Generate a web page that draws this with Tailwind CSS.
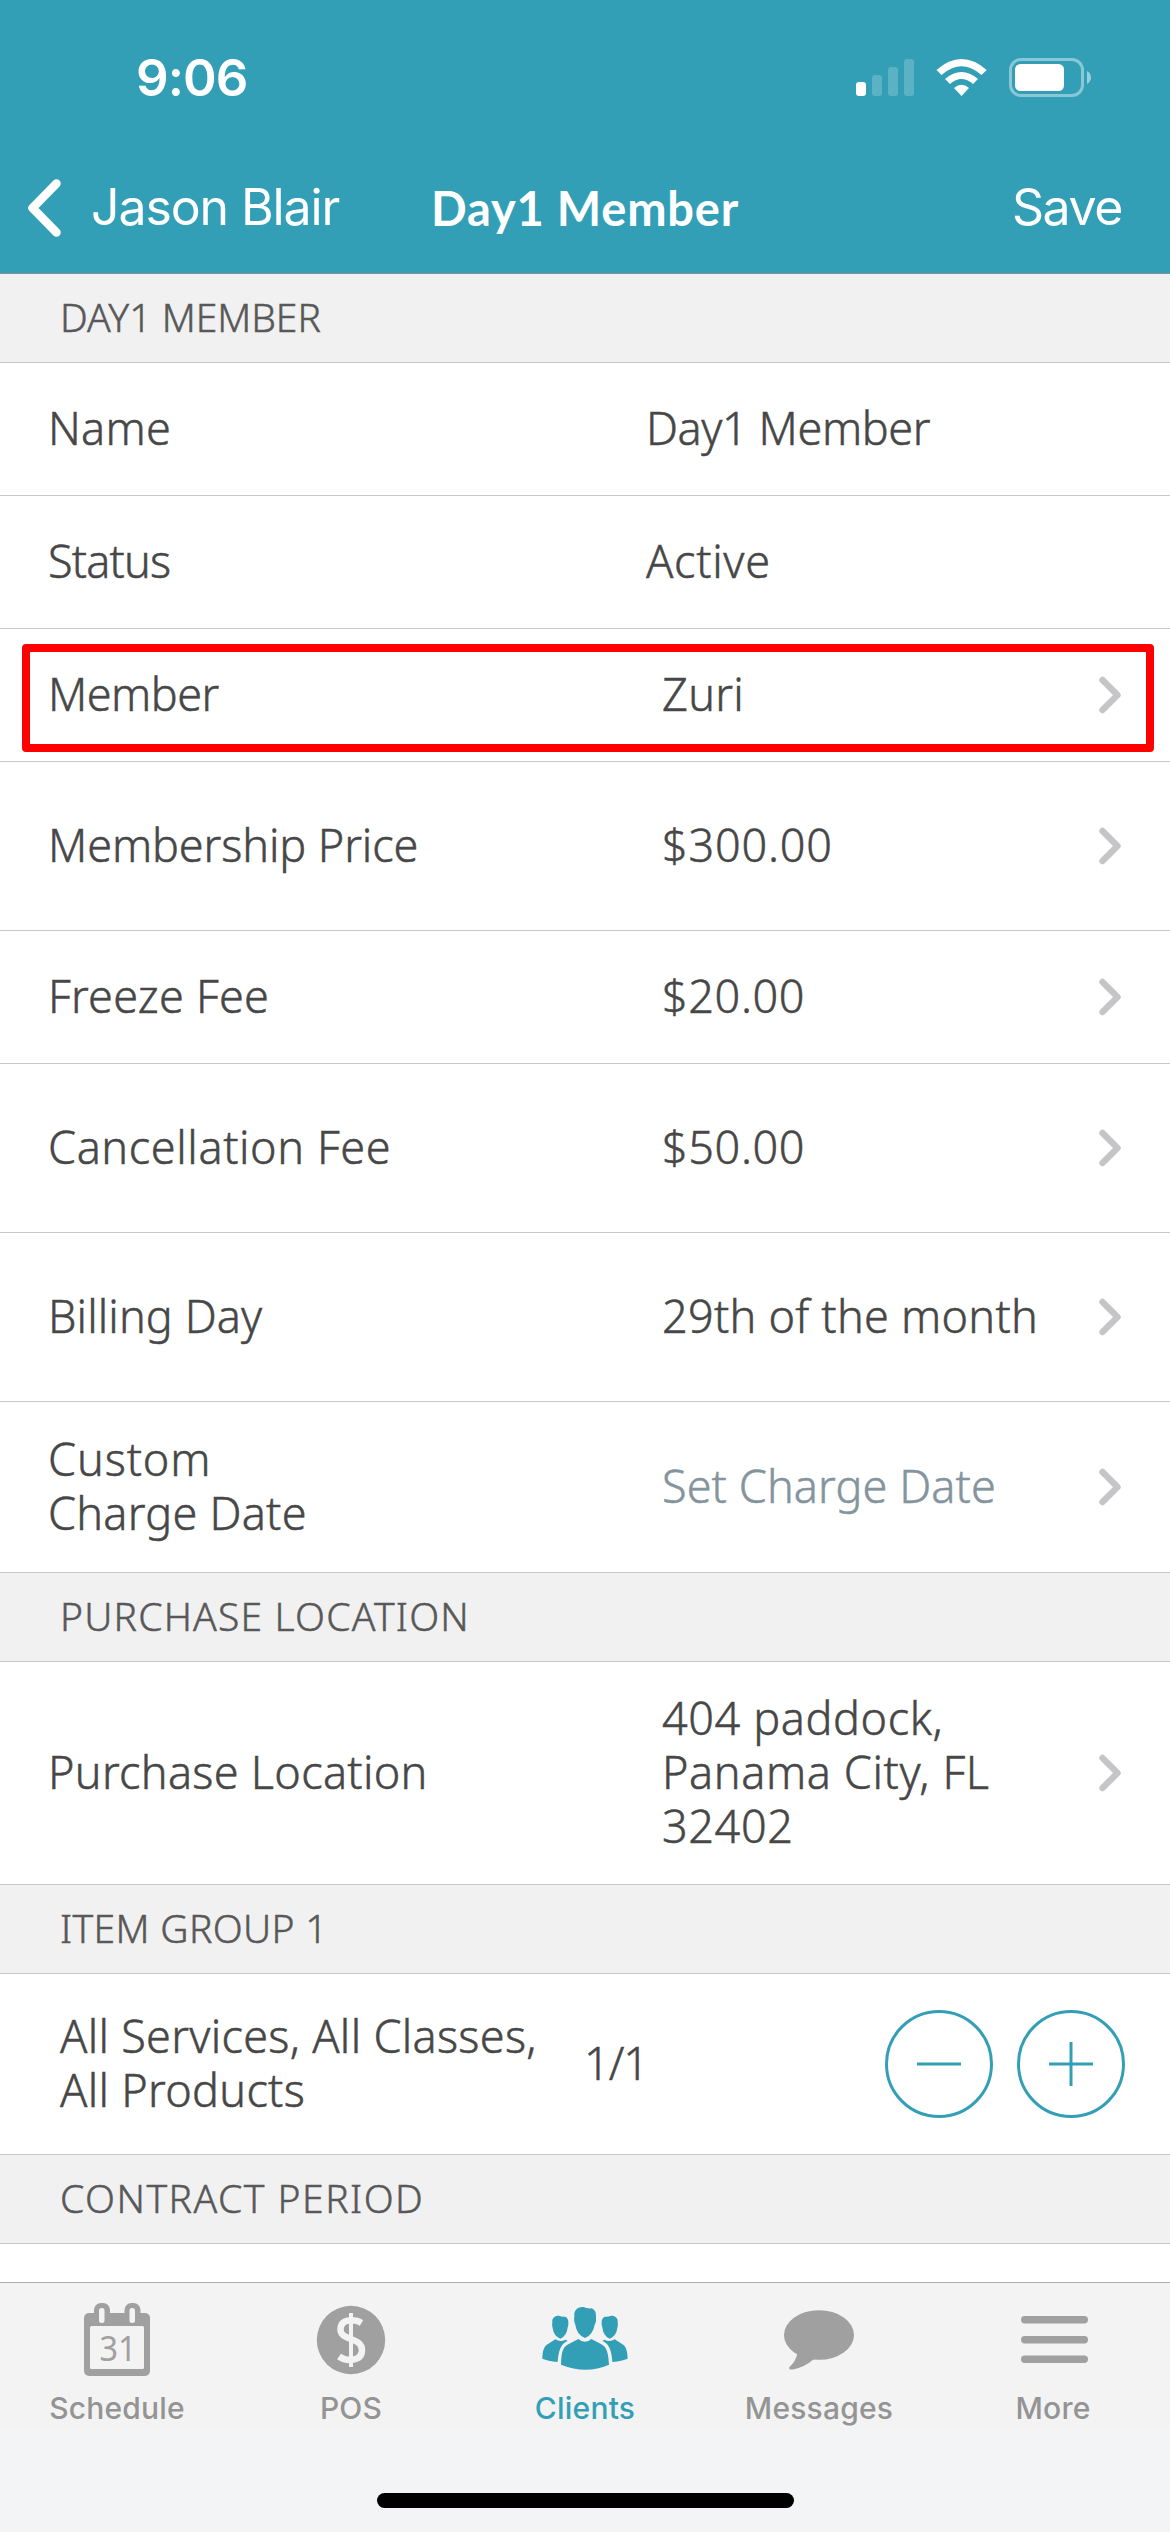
<!DOCTYPE html>
<html lang="en">
<head>
<meta charset="utf-8">
<title>Day1 Member</title>
<script src="https://cdn.jsdelivr.net/npm/@tailwindcss/browser@4"></script>
</head>
<body class="w-[1170px] h-[2532px] overflow-hidden bg-white font-['Noto_Sans',sans-serif] text-[#474747]">
<svg class="hidden">
  <symbol id="chev" viewBox="0 0 22 38"><path d="M3.5 4 L18.5 19 L3.5 34" fill="none" stroke="#c5c5c8" stroke-width="6.4" stroke-linecap="round" stroke-linejoin="round"/></symbol>
</svg>
<div class="flex flex-col h-[2532px]">
  <header class="h-[274px] shrink-0 bg-[#329fb7] border-b border-[#8a9294] text-white font-['Inter',sans-serif] flex flex-col">
    <div class="h-[154px] pl-[136px] pr-[78px] pt-px flex items-center justify-between">
      <span class="text-[51px] font-semibold leading-none tracking-[-0.9px]">9:06</span>
      <svg class="w-[236px] h-[40px]" viewBox="856 58 236 40">
        <rect x="856" y="82" width="10" height="14" rx="3" fill="#fff"/>
        <g fill="#fff" fill-opacity=".2">
          <rect x="872" y="75" width="10" height="21" rx="3"/>
          <rect x="888" y="67" width="10" height="29" rx="3"/>
          <rect x="904" y="59" width="10" height="37" rx="3"/>
        </g>
        <g fill="#fff">
          <path d="M936.5 70 Q961.500 48 986.700 70 L981.500 75 Q961.500 57.500 941.500 75Z"/>
          <path d="M945 79 Q961.500 65 978 79 L973 84 Q961.500 74 950 84Z"/>
          <path d="M954 88 Q961.500 81.500 969 88 L961.500 96Z"/>
        </g>
        <rect x="1010.500" y="59.500" width="72" height="36" rx="10.500" fill="none" stroke="#fff" stroke-opacity=".42" stroke-width="3"/>
        <rect x="1015" y="64" width="49" height="27" rx="5.500" fill="#fff"/>
        <path d="M1087 71 C1092.300 73.500 1092.300 81.500 1087 84Z" fill="#fff" fill-opacity=".5"/>
      </svg>
    </div>
    <div class="h-[107px] pl-7 pr-[48px] grid grid-cols-[403px_1fr_auto] items-center">
      <div class="flex items-center gap-[30px]">
        <svg class="w-[33px] h-[58px]" viewBox="0 0 33 58"><path d="M28.500 4.500 L4.500 29 L28.500 53.500" fill="none" stroke="#fff" stroke-width="8.500" stroke-linecap="round" stroke-linejoin="round"/></svg>
        <span class="text-[50px] tracking-[-1.1px] leading-none whitespace-nowrap pb-0.5">Jason Blair</span>
      </div>
      <span class="font-['Lato',sans-serif] font-bold text-[47px] tracking-[0.8px] leading-none pt-0.5">Day1 Member</span>
      <span class="text-[50px] tracking-[-1.4px] leading-none pb-0.5">Save</span>
    </div>
  </header>

  <main class="h-[2008px] shrink-0 overflow-hidden text-[45px] leading-[54px] font-light tracking-[0.25px] [-webkit-text-stroke:0.5px] [&_span]:pb-0.5 [&_h2]:pb-0.5">
    <h2 class="h-[89px] bg-[#f1f1f1] border-b border-[#c8c8c9] pl-[60px] flex items-center text-[39px] text-[#585858] tracking-normal">DAY1 MEMBER</h2>
    <div class="h-[133px] border-b border-[#c8c8c9] pl-12 grid grid-cols-[598px_1fr] items-center"><span>Name</span><span class="tracking-[-0.4px]">Day1 Member</span></div>
    <div class="h-[133px] border-b border-[#c8c8c9] pl-12 grid grid-cols-[598px_1fr] items-center"><span class="tracking-[-0.8px]">Status</span><span class="tracking-[0.7px]">Active</span></div>
    <div class="relative h-[133px] border-b border-[#c8c8c9] pl-12 pr-[49px] grid grid-cols-[614px_1fr_22px] items-center"><span class="tracking-[-0.5px]">Member</span><span>Zuri</span><svg class="w-[22px] h-[38px]"><use href="#chev"/></svg>
      <div class="absolute left-[22px] top-[15px] w-[1132px] h-[108px] border-8 border-[#ff0000] rounded"></div>
    </div>
    <div class="h-[169px] border-b border-[#c8c8c9] pl-12 pr-[49px] grid grid-cols-[614px_1fr_22px] items-center"><span class="tracking-[-0.1px]">Membership Price</span><span class="tracking-[0.8px]">$300.00</span><svg class="w-[22px] h-[38px]"><use href="#chev"/></svg></div>
    <div class="h-[133px] border-b border-[#c8c8c9] pl-12 pr-[49px] grid grid-cols-[614px_1fr_22px] items-center"><span>Freeze Fee</span><span class="tracking-[0.6px]">$20.00</span><svg class="w-[22px] h-[38px]"><use href="#chev"/></svg></div>
    <div class="h-[169px] border-b border-[#c8c8c9] pl-12 pr-[49px] grid grid-cols-[614px_1fr_22px] items-center"><span class="tracking-[0.6px]">Cancellation Fee</span><span class="tracking-[0.6px]">$50.00</span><svg class="w-[22px] h-[38px]"><use href="#chev"/></svg></div>
    <div class="h-[169px] border-b border-[#c8c8c9] pl-12 pr-[49px] grid grid-cols-[614px_1fr_22px] items-center"><span class="tracking-[0.1px]">Billing Day</span><span>29th of the month</span><svg class="w-[22px] h-[38px]"><use href="#chev"/></svg></div>
    <div class="h-[171px] border-b border-[#c8c8c9] pl-12 pr-[49px] grid grid-cols-[614px_1fr_22px] items-center"><span><span class="tracking-[0.9px]">Custom</span><br>Charge Date</span><span class="text-[#84949d] tracking-[0.1px]">Set Charge Date</span><svg class="w-[22px] h-[38px]"><use href="#chev"/></svg></div>
    <h2 class="h-[89px] bg-[#f1f1f1] border-b border-[#c8c8c9] pl-[60px] flex items-center text-[39px] text-[#585858] tracking-[1.2px]">PURCHASE LOCATION</h2>
    <div class="h-[223px] border-b border-[#c8c8c9] pl-12 pr-[49px] grid grid-cols-[614px_1fr_22px] items-center"><span class="tracking-[0.3px]">Purchase Location</span><span class="tracking-[0.6px]">404 paddock,<br>Panama City, FL<br>32402</span><svg class="w-[22px] h-[38px]"><use href="#chev"/></svg></div>
    <h2 class="h-[89px] bg-[#f1f1f1] border-b border-[#c8c8c9] pl-[60px] flex items-center text-[39px] text-[#585858] tracking-[0.35px]">ITEM GROUP 1</h2>
    <div class="h-[181px] border-b border-[#c8c8c9] pl-[60px] pr-[45px] grid grid-cols-[524px_1fr_240px] items-center">
      <span class="tracking-[0.3px]">All Services, All Classes,<br>All Products</span><span class="tracking-[-1px]">1/1</span>
      <div class="flex gap-6">
        <svg class="w-[108px] h-[108px]" viewBox="0 0 108 108" fill="none" stroke="#329fb7" stroke-width="3"><circle cx="54" cy="54" r="52.500"/><path d="M32 54H76"/></svg>
        <svg class="w-[108px] h-[108px]" viewBox="0 0 108 108" fill="none" stroke="#329fb7" stroke-width="3"><circle cx="54" cy="54" r="52.500"/><path d="M32 54H76M54 32V76"/></svg>
      </div>
    </div>
    <h2 class="h-[89px] bg-[#f1f1f1] border-b border-[#c8c8c9] pl-[60px] flex items-center text-[39px] text-[#585858] tracking-[1.5px]">CONTRACT PERIOD</h2>
  </main>

  <nav class="h-[148px] shrink-0 border-t border-[#adadad] bg-[#f3f3f3] grid grid-cols-5 text-center font-['Inter',sans-serif] font-medium text-[30px] leading-[36px] tracking-[0.2px] text-[#949494]">
    <div class="flex flex-col items-center pt-[17px] gap-[14px]">
      <svg class="w-[74px] h-[76px]" viewBox="80 2300 74 76">
        <g fill="#a0a0a0"><rect x="84" y="2313" width="66" height="63" rx="5"/><rect x="94" y="2303" width="16" height="22" rx="7"/><rect x="124.500" y="2303" width="16" height="22" rx="7"/></g>
        <g fill="#f3f3f3"><rect x="90" y="2326" width="54" height="43" rx="1.500"/><rect x="99" y="2308" width="5.500" height="15" rx="2.500"/><rect x="129.500" y="2308" width="5.500" height="15" rx="2.500"/></g>
        <text x="118" y="2360.500" text-anchor="middle" font-family="Noto Sans" font-size="35" font-weight="400" letter-spacing="0" textLength="37" lengthAdjust="spacingAndGlyphs" fill="#a0a0a0">31</text>
      </svg>
      <span>Schedule</span>
    </div>
    <div class="flex flex-col items-center pt-[17px] gap-[14px]">
      <svg class="w-[70px] h-[76px]" viewBox="316 2300 70 76">
        <circle cx="351" cy="2340" r="34.200" fill="#a0a0a0"/>
        <path d="M361.500 2323 C356 2319.500 340.500 2317.500 340.500 2329.500 C340.500 2341 362 2337 362 2350 C362 2362 346 2361.500 339 2356.500" fill="none" stroke="#f3f3f3" stroke-width="6.500"/>
        <path d="M351 2313V2367" stroke="#f3f3f3" stroke-width="4"/>
      </svg>
      <span>POS</span>
    </div>
    <div class="flex flex-col items-center pt-[17px] gap-[14px] text-[#329fb7]">
      <svg class="w-[88px] h-[76px]" viewBox="60 30 264 228" fill="#329fb7">
        <path id="side" d="M94 96 C92 84 103 76 114 77 Q122 81 132 80 Q142 84 142 96 Q143 104 140 112 Q138 138 118 146 Q98 138 95 114 Q92 106 94 96Z M64 206 C65 180 69 168 82 161 L103 148 Q118 158 134 149 L140 153 Q113 162 110 216 Q80 213 64 206Z"/>
        <use href="#side" transform="translate(384 0) scale(-1 1)"/>
        <path d="M160 78 C158 58 174 49 188 51 Q196 56 212 55 Q226 62 225 78 L225 92 Q224 100 221 104 Q216 134 192 144 Q167 134 163 104 Q158 96 160 78Z"/>
        <path d="M120 224 C121 182 128 170 142 163 L172 147 Q192 164 211 147 L240 162 C256 170 262 186 264 224 Q195 254 120 224Z"/>
      </svg>
      <span>Clients</span>
    </div>
    <div class="flex flex-col items-center pt-[17px] gap-[14px]">
      <svg class="w-[72px] h-[76px]" viewBox="782 2300 72 76" fill="#a0a0a0"><ellipse cx="818" cy="2335" rx="35" ry="24.800"/><path d="M796.500 2353 Q795 2361 788.500 2367 Q787 2370 792 2369.500 Q804 2367 813 2359Z"/></svg>
      <span>Messages</span>
    </div>
    <div class="flex flex-col items-center pt-[17px] gap-[14px]">
      <svg class="w-[70px] h-[76px]" viewBox="1018 2300 70 76" fill="#a0a0a0"><rect x="1021" y="2316" width="67" height="7.500" rx="3.700"/><rect x="1021" y="2336" width="67" height="7.500" rx="3.700"/><rect x="1021" y="2355.500" width="67" height="7.500" rx="3.700"/></svg>
      <span>More</span>
    </div>
  </nav>
  <div class="flex-1 bg-[#f3f4f6] pt-[63px]"><div class="mx-auto w-[417px] h-[15px] rounded-full bg-black"></div></div>
</div>
</body>
</html>
